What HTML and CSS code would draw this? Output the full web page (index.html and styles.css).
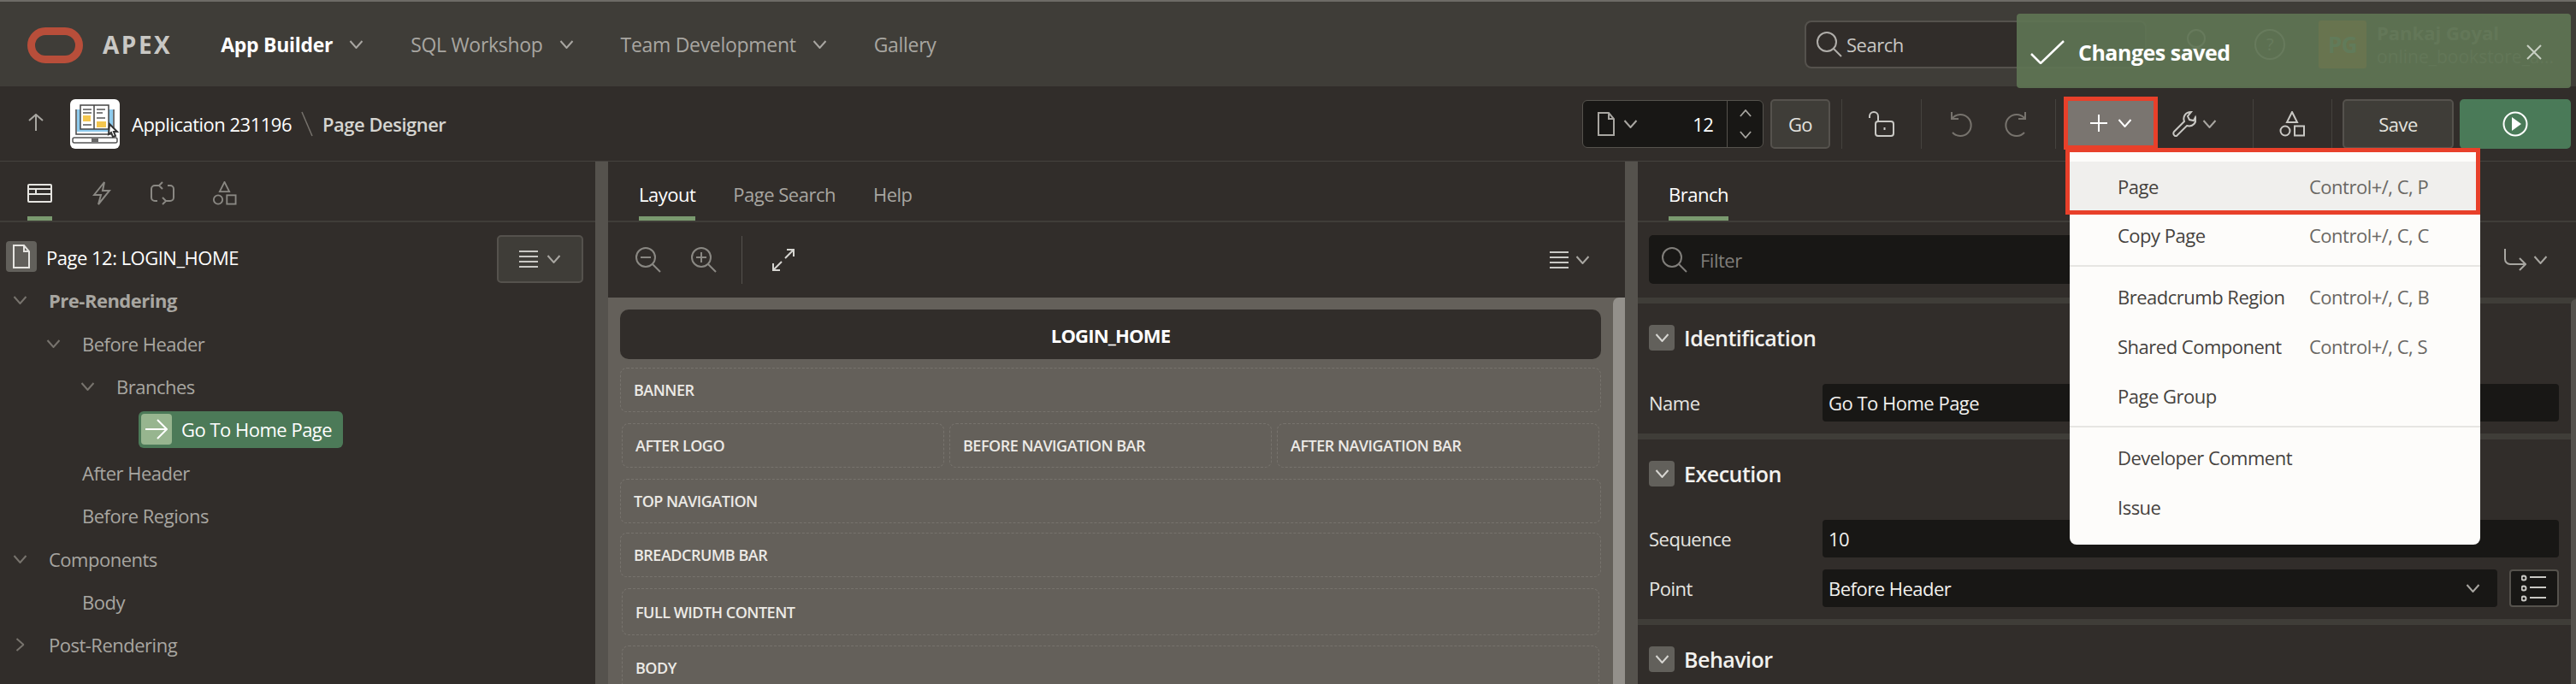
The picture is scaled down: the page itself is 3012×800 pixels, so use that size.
FILE: index.html
```html
<!DOCTYPE html>
<html lang="en">
<head>
    <meta charset="UTF-8">
    <title>Page Designer</title>
    <link rel="stylesheet" href="styles.css">
</head>
<body>
    <svg class="icon-defs" width="0" height="0">
        <symbol id="i-chev" viewBox="0 0 16 10"><path d="M1 1l7 8 7-8"/></symbol>
        <symbol id="i-search" viewBox="0 0 30 30"><circle cx="12" cy="12" r="11"/><path d="M20 20l9 9"/></symbol>
        <symbol id="i-page" viewBox="0 0 20 28"><path d="M1 1h12l6 7v19H1zM13 1v7h6"/></symbol>
        <symbol id="i-shapes" viewBox="0 0 30 30"><path d="M15 1l6 12H9z"/><circle cx="7" cy="23" r="5.5"/><rect x="18" y="17.5" width="11" height="11"/></symbol>
        <symbol id="i-menu" viewBox="0 0 22 22"><path d="M0 2h22M0 8h22M0 14h22M0 20h22"/></symbol>
    </svg>

    <header class="top-bar">
        <svg class="logo" viewBox="0 0 65 42"><rect x="4.5" y="4.5" width="56" height="33" rx="16.5"/></svg>
        <span class="brand">APEX</span>
        <nav class="main-nav">
            <a class="nav-item is-current">App Builder <svg class="chev"><use href="#i-chev"/></svg></a>
            <a class="nav-item">SQL Workshop <svg class="chev"><use href="#i-chev"/></svg></a>
            <a class="nav-item">Team Development <svg class="chev"><use href="#i-chev"/></svg></a>
            <a class="nav-item">Gallery</a>
        </nav>
        <div class="user-area">
            <div class="search-box"><svg class="search-icon"><use href="#i-search"/></svg>Search</div>
            <svg class="person-icon" viewBox="0 0 26 36"><circle cx="13" cy="11" r="10"/><path d="M1 35c1-9 6-13 12-13s11 4 12 13"/></svg>
            <div class="help-icon">?</div>
            <div class="avatar">PG</div>
            <div class="user-name">
                <div class="user-title">Pankaj Goyal</div>
                <div class="user-sub">online_bookstore_a...</div>
            </div>
        </div>
    </header>

    <div class="tool-bar">
        <svg class="up-arrow" viewBox="0 0 18 20"><path d="M9 20V1M1 8l8-7 8 7"/></svg>
        <svg class="app-icon" viewBox="0 0 58 58">
            <rect width="58" height="58" rx="6" fill="#fff"/>
            <path d="M8 12h42v26H8z" fill="#8ecbee"/>
            <path d="M7 12v29h44V12" fill="none" stroke="#444" stroke-width="1.5"/>
            <rect x="3" y="45" width="52" height="6" rx="2" fill="#fff" stroke="#555" stroke-width="1.5"/>
            <rect x="25" y="46" width="8" height="4" fill="#666"/>
            <path d="M12 7h16v28H12zM28 7h17v28H28z" fill="#fff" stroke="#444" stroke-width="1.5"/>
            <path d="M15 12h10M15 16h10M31 12h10M31 16h7M15 30h10M31 22h10" stroke="#555" stroke-width="1.5"/>
            <rect x="15" y="19" width="9" height="7" fill="#f4c64e"/>
            <rect x="31" y="26" width="11" height="7" fill="#f4c64e"/>
            <path d="M46 29l9 9-4 0 2 5-3 1-2-5-3 2z" fill="#fff" stroke="#333"/>
        </svg>
        <span class="crumb-app">Application 231196</span>
        <svg class="crumb-slash" viewBox="0 0 14 30"><path d="M1 1l12 28"/></svg>
        <span class="crumb-page">Page Designer</span>

        <div class="tools">
            <div class="page-picker">
                <svg class="picker-page"><use href="#i-page"/></svg>
                <svg class="chev"><use href="#i-chev"/></svg>
                <span class="picker-num">12</span>
                <div class="picker-spin">
                    <svg class="chev chev-up"><use href="#i-chev"/></svg>
                    <svg class="chev"><use href="#i-chev"/></svg>
                </div>
            </div>
            <div class="btn btn-go">Go</div>
            <div class="tool-sep sep-a"></div>
            <svg class="tool-icon lock-icon" viewBox="0 0 30 30"><path d="M1 8V6a5 5 0 0 1 10 0v6"/><rect x="8" y="12" width="21" height="17" rx="3"/><path d="M18.500 19v3"/></svg>
            <div class="tool-sep sep-b"></div>
            <svg class="tool-icon undo-icon" viewBox="0 0 28 30"><path d="M4 8a12.500 12.500 0 1 1 0 17M3 1v8h8"/></svg>
            <svg class="tool-icon redo-icon" viewBox="0 0 28 30"><path d="M24 8a12.500 12.500 0 1 0 0 17M25 1v8h-8"/></svg>
            <div class="tool-sep sep-c"></div>
            <div class="create-btn">
                <svg class="plus-icon" viewBox="0 0 20 20"><path d="M10 0v20M0 10h20"/></svg>
                <svg class="chev"><use href="#i-chev"/></svg>
            </div>
            <div class="wrench-btn">
                <svg class="wrench-icon" viewBox="0 0 28 30"><path d="M2 24L14 12c-2-5 1-11 8-11l-4 5 2 4 5 1 2-4c2 6-3 12-10 10L5 29c-2 1-5-2-3-5z"/></svg>
                <svg class="chev"><use href="#i-chev"/></svg>
            </div>
            <div class="tool-sep sep-d"></div>
            <svg class="tool-icon shapes-icon"><use href="#i-shapes"/></svg>
            <div class="tool-sep sep-b"></div>
            <div class="btn btn-save">Save</div>
            <div class="btn-run">
                <svg class="run-icon" viewBox="0 0 30 30"><circle cx="15" cy="15" r="13.500"/><path class="run-tri" d="M11 7l11 8-11 8z"/></svg>
            </div>
        </div>
    </div>

    <main class="designer">
        <section class="panel">
            <div class="tabs">
                <div class="icon-tab is-active">
                    <svg class="tab-svg" viewBox="0 0 29 22"><rect x="1" y="1" width="27" height="20" rx="1"/><path d="M1 6h27M10 6v6M1 12h27"/></svg>
                </div>
                <div class="icon-tab tab-bolt">
                    <svg class="tab-svg tab-dim" viewBox="0 0 22 28"><path d="M14 1L2 16h8l-3 11 13-16h-8z"/></svg>
                </div>
                <div class="icon-tab tab-loop">
                    <svg class="tab-svg tab-dim" viewBox="0 0 30 28"><path d="M12 5H6a4 4 0 0 0-4 4v10a4 4 0 0 0 4 4h3M18 23h6a4 4 0 0 0 4-4V9a4 4 0 0 0-4-4h-3M15 1l-4 4 4 4M15 19l4 4-4 4"/></svg>
                </div>
                <div class="icon-tab tab-shapes">
                    <svg class="tab-svg tab-dim"><use href="#i-shapes"/></svg>
                </div>
            </div>
            <div class="tree-head">
                <div class="tree-head-icon"><svg><use href="#i-page"/></svg></div>
                <span class="tree-title">Page 12: LOGIN_HOME</span>
                <div class="btn btn-menu">
                    <svg class="menu-icon"><use href="#i-menu"/></svg>
                    <svg class="chev"><use href="#i-chev"/></svg>
                </div>
            </div>
            <ul class="tree">
                <li class="tree-row lvl-1 is-bold"><svg class="chev"><use href="#i-chev"/></svg>Pre-Rendering</li>
                <li class="tree-row lvl-2"><svg class="chev"><use href="#i-chev"/></svg>Before Header</li>
                <li class="tree-row lvl-3"><svg class="chev"><use href="#i-chev"/></svg>Branches</li>
                <li class="tree-row lvl-4">
                    <span class="tree-node">
                        <span class="node-icon"><svg viewBox="0 0 26 24"><path d="M0 12h25M14 1l11 11-11 11"/></svg></span>
                        Go To Home Page
                    </span>
                </li>
                <li class="tree-row lvl-2 no-toggle">After Header</li>
                <li class="tree-row lvl-2 no-toggle">Before Regions</li>
                <li class="tree-row lvl-1"><svg class="chev"><use href="#i-chev"/></svg>Components</li>
                <li class="tree-row lvl-2 no-toggle">Body</li>
                <li class="tree-row lvl-1"><svg class="chev chev-right"><use href="#i-chev"/></svg>Post-Rendering</li>
            </ul>
        </section>

        <div class="splitter"></div>

        <section class="panel">
            <div class="tabs text-tabs">
                <div class="text-tab is-active">Layout</div>
                <div class="text-tab">Page Search</div>
                <div class="text-tab">Help</div>
            </div>
            <div class="layout-tools">
                <svg class="zoom-icon" viewBox="0 0 30 30"><circle cx="12" cy="12" r="11"/><path d="M20 20l9 9M6 12h12"/></svg>
                <svg class="zoom-icon" viewBox="0 0 30 30"><circle cx="12" cy="12" r="11"/><path d="M20 20l9 9M6 12h12M12 6v12"/></svg>
                <div class="layout-sep"></div>
                <svg class="expand-icon" viewBox="0 0 26 26"><path d="M15 11L25 1M17 1h8v8M11 15L1 25M1 17v8h8"/></svg>
                <div class="layout-menu">
                    <svg class="menu-icon"><use href="#i-menu"/></svg>
                    <svg class="chev"><use href="#i-chev"/></svg>
                </div>
            </div>
            <div class="canvas">
                <div class="canvas-title">LOGIN_HOME</div>
                <div class="region region-first">BANNER</div>
                <div class="region-row">
                    <div class="region">AFTER LOGO</div>
                    <div class="region">BEFORE NAVIGATION BAR</div>
                    <div class="region">AFTER NAVIGATION BAR</div>
                </div>
                <div class="region">TOP NAVIGATION</div>
                <div class="region region-crumb">BREADCRUMB BAR</div>
                <div class="region region-tall">FULL WIDTH CONTENT</div>
                <div class="region region-body">BODY</div>
                <div class="canvas-scroll"></div>
            </div>
        </section>

        <div class="splitter"></div>

        <section class="panel">
            <div class="tabs text-tabs branch-tabs">
                <div class="text-tab is-active">Branch</div>
            </div>
            <div class="filter-row">
                <div class="filter-box"><svg class="search-icon"><use href="#i-search"/></svg>Filter</div>
                <svg class="branch-icon" viewBox="0 0 26 26"><path d="M1 0v12a6 6 0 0 0 6 6h18M18 11l7 7-7 7"/></svg>
                <svg class="chev"><use href="#i-chev"/></svg>
            </div>
            <div class="prop-section">
                <div class="prop-head"><span class="prop-toggle"><svg class="chev"><use href="#i-chev"/></svg></span>Identification</div>
                <div class="prop-row"><label>Name</label><div class="prop-field">Go To Home Page</div></div>
            </div>
            <div class="prop-section">
                <div class="prop-head"><span class="prop-toggle"><svg class="chev"><use href="#i-chev"/></svg></span>Execution</div>
                <div class="prop-row"><label>Sequence</label><div class="prop-field">10</div></div>
                <div class="prop-row">
                    <label>Point</label>
                    <div class="prop-field">Before Header <svg class="chev"><use href="#i-chev"/></svg></div>
                    <div class="list-btn">
                        <svg viewBox="0 0 30 34"><circle cx="3" cy="5" r="2.500"/><circle cx="3" cy="17" r="2.500"/><circle cx="3" cy="29" r="2.500"/><path d="M10 4h19M10 16h19M10 28h19"/></svg>
                    </div>
                </div>
            </div>
            <div class="prop-section">
                <div class="prop-head"><span class="prop-toggle"><svg class="chev"><use href="#i-chev"/></svg></span>Behavior</div>
            </div>
            <div class="props-scroll"></div>
        </section>
    </main>

    <div class="toast">
        <svg class="toast-check" viewBox="0 0 40 28"><path d="M1 16l11 11L39 1"/></svg>
        <span class="toast-text">Changes saved</span>
        <svg class="toast-close" viewBox="0 0 18 18"><path d="M1 1l16 16M17 1L1 17"/></svg>
    </div>

    <div class="create-menu">
        <div class="menu-mark"></div>
        <div class="menu-group">
            <div class="menu-item is-focused"><span>Page</span><span class="shortcut">Control+/, C, P</span></div>
            <div class="menu-item"><span>Copy Page</span><span class="shortcut">Control+/, C, C</span></div>
        </div>
        <div class="menu-group">
            <div class="menu-item"><span>Breadcrumb Region</span><span class="shortcut">Control+/, C, B</span></div>
            <div class="menu-item"><span>Shared Component</span><span class="shortcut">Control+/, C, S</span></div>
            <div class="menu-item"><span>Page Group</span></div>
        </div>
        <div class="menu-group menu-group-last">
            <div class="menu-item"><span>Developer Comment</span></div>
            <div class="menu-item"><span>Issue</span></div>
        </div>
    </div>
</body>
</html>
```

FILE: styles.css
```css
:root {
    --bar: #3f3d38;
    --panel: #312d2a;
    --field: #181715;
    --split: #55524d;
    --line: #55524d;
    --muted: #a8a6a1;
    --accent: #7a9a6f;
    --red: #e8402a;
}

* { box-sizing: border-box; }

html { height: 800px; overflow: hidden; }

body {
    margin: 0;
    width: 3012px;
    height: 800px;
    overflow: hidden;
    position: relative;
    background: var(--panel);
    color: #fff;
    font-family: 'Open Sans', sans-serif;
    font-size: 22px;
    letter-spacing: -0.5px;
}

svg { display: block; fill: none; stroke: currentColor; stroke-width: 2; flex: none; }
.icon-defs { position: absolute; }
.chev { width: 17px; height: 10px; color: #a8a6a1; }

/* --- Top bar --- */
.top-bar {
    height: 101px;
    border-top: 2px solid #6d6b66;
    background: var(--bar);
    display: flex;
    align-items: center;
    padding: 0 21px 0 32px;
}
.logo { width: 65px; height: 42px; color: #b84e3a; stroke-width: 9; margin-top: 2px; }
.brand { margin-left: 23px; font-size: 28px; font-weight: 700; letter-spacing: 2.5px; color: #c9c8c4; }
.main-nav { display: flex; margin-left: 57px; gap: 55px; }
.nav-item { display: flex; align-items: center; gap: 19px; color: var(--muted); font-size: 23px; letter-spacing: -0.3px; }
.nav-item.is-current { color: #fff; font-weight: 700; }
.user-area { margin-left: auto; display: flex; align-items: center; }
.search-box {
    width: 400px; height: 56px;
    background: var(--panel); border: 2px solid var(--line); border-radius: 8px;
    display: flex; align-items: center; gap: 5px; padding-left: 12px;
    color: #c9c8c4;
}
.search-icon { width: 30px; height: 30px; color: #b0aeaa; }
.person-icon { width: 26px; height: 36px; margin-left: 45px; color: #a8a6a1; }
.help-icon {
    width: 36px; height: 36px; margin-left: 55px;
    border: 2px solid #a8a6a1; border-radius: 50%;
    display: flex; align-items: center; justify-content: center;
    color: #a8a6a1; font-size: 20px;
}
.avatar {
    width: 56px; height: 56px; margin-left: 39px;
    background: #b76524; border-radius: 3px;
    display: flex; align-items: center; justify-content: center;
    color: #6fb08a; font-size: 26px; font-weight: 700;
}
.user-name { width: 212px; margin-left: 12px; line-height: 28px; }
.user-title { color: #85837c; font-weight: 700; letter-spacing: 0; }
.user-sub { color: #7e7c76; letter-spacing: 0; font-size: 21px; }

/* --- Tool bar --- */
.tool-bar {
    height: 88px;
    background: var(--panel);
    display: flex;
    align-items: center;
    padding: 0 6px 0 33px;
    border-bottom: 1px solid #45423e;
}
.up-arrow { width: 18px; height: 20px; color: #a8a6a1; margin-top: -4px; }
.app-icon { width: 58px; height: 58px; margin-left: 31px; stroke: none; }
.crumb-app { margin-left: 14px; }
.crumb-slash { width: 14px; height: 30px; margin-left: 11px; color: #77736d; stroke-width: 1.500; }
.crumb-page { margin-left: 11px; font-weight: 600; color: #d6d5d1; }
.tools { margin-left: auto; display: flex; align-items: center; }

.page-picker {
    width: 212px; height: 56px;
    background: var(--field); border: 1px solid var(--line); border-radius: 6px;
    display: flex; align-items: center; padding-left: 17px;
}
.picker-page { width: 20px; height: 28px; color: #a8a6a1; }
.page-picker > .chev { margin-left: 10px; }
.picker-num { width: 89px; text-align: right; color: #fff; }
.picker-spin {
    margin-left: 16px; height: 100%; width: 42px;
    border-left: 1px solid var(--line);
    display: flex; flex-direction: column; align-items: center; justify-content: center; gap: 16px;
}
.picker-spin .chev { width: 14px; height: 9px; }
.chev-up { transform: rotate(180deg); }

.btn {
    background: var(--bar); border: 2px solid var(--line); border-radius: 5px;
    display: flex; align-items: center; justify-content: center;
    color: #e4e3df;
}
.btn-go { width: 70px; height: 58px; margin-left: 8px; }
.btn-save { width: 130px; height: 58px; margin-left: 12px; }
.tool-sep { width: 1px; height: 58px; background: #45423e; }
.sep-a { margin-left: 13px; }
.sep-b { margin-left: 31px; }
.sep-c { margin-left: 32px; }
.sep-d { margin-left: 42px; }
.tool-icon { height: 30px; color: #c9c8c4; }
.lock-icon { width: 30px; margin-left: 31px; }
.undo-icon { width: 28px; margin-left: 32px; color: #77736d; }
.redo-icon { width: 28px; margin-left: 36px; color: #77736d; }
.shapes-icon { width: 30px; margin-left: 30px; }
.create-btn {
    width: 100px; height: 52px; margin-left: 14px;
    background: #7a7570; outline: 5px solid var(--red);
    display: flex; align-items: center; justify-content: center; gap: 12px;
    position: relative; top: -1px;
}
.create-btn .chev { color: #fff; }
.plus-icon { width: 20px; height: 20px; color: #fff; }
.wrench-btn { margin-left: 22px; display: flex; align-items: center; gap: 7px; }
.wrench-icon { width: 28px; height: 30px; color: #c9c8c4; }
.btn-run {
    width: 130px; height: 58px; margin-left: 7px;
    background: #4a7a58; border-radius: 5px;
    display: flex; align-items: center; justify-content: center;
}
.run-icon { width: 30px; height: 30px; color: #fff; }
.run-tri { fill: #fff; stroke: none; }

/* --- Panels --- */
.designer { display: grid; grid-template-columns: 696px 15px 1189px 15px 1097px; height: 611px; }
.splitter { background: var(--split); }
.panel { position: relative; overflow: hidden; background: var(--panel); display: flex; flex-direction: column; }

.tabs { flex: none; height: 71px; border-bottom: 2px solid var(--bar); display: flex; padding-left: 32px; gap: 45px; }
.icon-tab { height: 69px; width: 29px; display: flex; align-items: center; justify-content: center; padding-top: 5px; position: relative; }
.tab-bolt { width: 22px; margin-left: 2px; }
.tab-loop { width: 30px; }
.tab-shapes { margin-left: -2px; }
.tab-svg { width: 100%; height: 28px; color: #e6e5e1; }
.tab-dim { color: #8a8883; }
.is-active::after { content: ""; position: absolute; left: 0; right: 0; bottom: 0; height: 5px; background: var(--accent); }
.text-tabs { padding-left: 36px; gap: 44px; }
.branch-tabs { padding-left: 36px; }
.text-tab { height: 69px; display: flex; align-items: center; padding-top: 6px; position: relative; color: var(--muted); }
.text-tab.is-active { color: #fff; }

/* --- Tree --- */
.tree-head { height: 66px; display: flex; padding: 15px 14px 0 7px; }
.tree-head-icon {
    width: 36px; height: 36px; margin-top: 7px;
    background: #62605b; border-radius: 4px;
    display: flex; align-items: center; justify-content: center;
}
.tree-head-icon svg { width: 20px; height: 28px; color: #e6e5e1; }
.tree-title { margin-left: 11px; line-height: 52px; }
.btn-menu { width: 101px; height: 56px; margin-left: auto; gap: 10px; }
.menu-icon { width: 22px; height: 22px; color: #c9c8c4; }
.tree { list-style: none; margin: 0; padding: 0; }
.tree-row { height: 50.400px; display: flex; align-items: center; color: var(--muted); }
.tree-row .chev { color: #77736d; margin-right: 25px; }
.lvl-1 { padding-left: 15px; }
.lvl-2 { padding-left: 54px; }
.lvl-3 { padding-left: 94px; }
.lvl-4 { padding-left: 162px; }
.no-toggle { padding-left: 96px; }
.is-bold { font-weight: 700; }
.chev-right { transform: rotate(-90deg); }
.tree-node {
    height: 43px; width: 239px;
    background: #4c7a58; border-radius: 6px;
    display: flex; align-items: center; gap: 11px; padding-left: 3px;
    color: #fff;
}
.node-icon { width: 36px; height: 36px; background: #97b58f; border-radius: 4px; display: flex; align-items: center; justify-content: center; }
.node-icon svg { width: 26px; height: 24px; color: #fff; }

/* --- Layout canvas --- */
.layout-tools { height: 88px; flex: none; display: flex; align-items: center; padding-left: 32px; padding-right: 41px; }
.zoom-icon { width: 30px; height: 30px; color: #8a8883; margin-right: 35px; }
.layout-sep { width: 1px; height: 56px; background: #55524d; margin-left: -6px; }
.expand-icon { width: 26px; height: 26px; margin-left: 35px; color: #d6d5d1; }
.layout-menu { margin-left: auto; display: flex; align-items: center; gap: 8px; }

.canvas { flex: 1; position: relative; background: #64605a; padding: 14px 28px 0 14px; }
.canvas-title {
    height: 58px; background: var(--panel); border-radius: 10px;
    display: flex; align-items: center; justify-content: center;
    font-weight: 700; letter-spacing: -0.8px; padding-top: 1px;
}
.region {
    height: 52px; margin-top: 13px;
    border: 1px dashed #77736d; border-radius: 8px;
    display: flex; align-items: center; padding-left: 15px;
    font-size: 18px; font-weight: 600; color: #eceae6;
}
.region-first { margin-top: 10px; }
.region-row { display: grid; grid-template-columns: repeat(3, 1fr); gap: 6px; padding: 0 2px; }
.region-crumb { margin-top: 11px; }
.region-tall { height: 55px; margin: 13px 2px 0; }
.region-body { height: 80px; margin: 12px 2px 0; padding-bottom: 28px; }
.canvas-scroll { position: absolute; top: 0; right: 0; bottom: 0; width: 14px; background: #93908b; border-radius: 7px 0 0 0; }

/* --- Properties --- */
.filter-row { height: 88px; flex: none; display: flex; align-items: center; padding-left: 13px; }
.filter-box {
    width: 950px; height: 57px; margin-top: -1px;
    background: var(--field); border-radius: 5px;
    display: flex; align-items: center; gap: 15px; padding-left: 15px;
    color: #807e7a;
}
.filter-box .search-icon { color: #807e7a; }
.branch-icon { width: 26px; height: 26px; margin-left: 50px; color: #a8a6a1; }
.filter-row .chev { margin-left: 8px; }

.prop-section { border-top: 7px solid var(--bar); padding: 0 20px 0 13px; }
.prop-head { display: flex; align-items: center; height: 30px; margin: 25px 0 39px; font-size: 25px; font-weight: 600; color: #f2f1ee; }
.prop-toggle {
    width: 30px; height: 30px; margin-right: 11px;
    background: #62605b; border-radius: 4px;
    display: flex; align-items: center; justify-content: center;
}
.prop-toggle .chev { color: #d6d5d1; }
.prop-row { display: flex; height: 44px; margin-bottom: 14px; align-items: center; }
.prop-row label { width: 203px; color: #e6e5e1; }
.prop-field {
    flex: 1; height: 44px;
    background: var(--field); border-radius: 4px;
    display: flex; align-items: center; justify-content: space-between; padding: 0 20px 0 7px;
    color: #f2f1ee;
}
.list-btn {
    width: 58px; height: 44px; margin-left: 14px;
    background: var(--field); border: 2px solid var(--line); border-radius: 4px;
    display: flex; align-items: center; justify-content: center;
}
.list-btn svg { width: 30px; height: 34px; color: #c9c8c4; }
.props-scroll { position: absolute; top: 161px; right: 0; bottom: 0; width: 6px; background: #55524d; border-radius: 6px 0 0 0; }

/* --- Overlays --- */
.toast {
    position: absolute; left: 2358px; top: 16px;
    width: 648px; height: 87px;
    background: rgba(95, 118, 84, 0.9); border-radius: 4px;
    display: flex; align-items: center; padding: 0 34px 0 16px;
}
.toast-check { width: 40px; height: 28px; margin-top: 3px; color: #fff; stroke-width: 2.500; }
.toast-text { margin-left: 16px; margin-top: 3px; font-size: 25px; font-weight: 700; }
.toast-close { width: 18px; height: 18px; margin-left: auto; margin-top: 3px; color: #c9d0c4; }

.create-menu {
    position: absolute; left: 2420px; top: 178px;
    width: 480px; height: 459px;
    background: #fdfcfa; border-radius: 0 0 8px 8px;
    padding-top: 11px;
    color: #45423e;
}
.menu-mark { position: absolute; left: -5px; top: -5px; width: 485px; height: 78px; border: 5px solid var(--red); z-index: 2; }
.menu-group { padding-bottom: 6px; }
.menu-group + .menu-group { border-top: 2px solid #e6e5e2; padding-top: 6px; }
.menu-group + .menu-group-last { padding-top: 6px; }
.menu-item { height: 58px; display: flex; align-items: center; padding-left: 56px; }
.menu-item:first-child.is-focused { height: 57px; background: #f0efed; padding-top: 1px; }
.menu-item span:first-child { width: 224px; }
.shortcut { color: #6a6864; }
```
